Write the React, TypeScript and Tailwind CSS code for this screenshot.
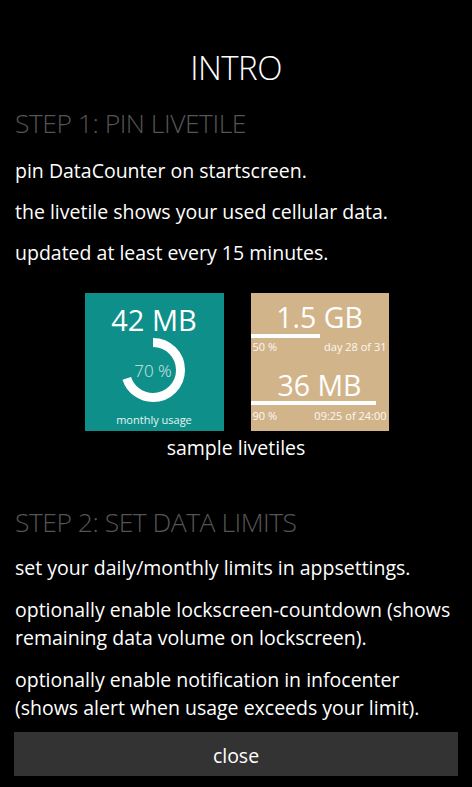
import React from "react";

const font = { fontFamily: '"Open Sans", "Noto Sans", sans-serif' };

function Ring() {
  const r = 27.5;
  const c = 2 * Math.PI * r;
  const pct = 0.7;
  return (
    <svg width="68" height="68" viewBox="0 0 68 68" className="absolute left-[34px] top-[43px]">
      <circle
        cx="34"
        cy="34"
        r={r}
        fill="none"
        stroke="#ffffff"
        strokeWidth="9"
        strokeDasharray={`${c * pct} ${c}`}
        transform="rotate(-90 34 34)"
      />
    </svg>
  );
}

export default function App() {
  return (
    <div className="w-[472px] h-[787px] bg-black text-white overflow-hidden" style={font}>
      <div className="pt-[48px] text-center text-[33px] font-light leading-[40px] tracking-[-0.5px]">INTRO</div>
      <div className="mt-[18px] px-[15px] text-[26.5px] font-light leading-[34px] text-[#555555] tracking-[-0.5px]">
        STEP 1: PIN LIVETILE
      </div>
      <div className="px-[15px] mt-[17px] flex flex-col gap-[13px] text-[19.5px] leading-[28px]">
        <p>pin DataCounter on startscreen.</p>
        <p>the livetile shows your used cellular data.</p>
        <p>updated at least every 15 minutes.</p>
      </div>
      <div className="mt-[26px] flex justify-center gap-[27px] pl-[1px]">
        <div className="relative w-[139px] h-[138px] bg-[#0e8f8a] flex flex-col items-center">
          <div className="mt-[10px] text-[29px] leading-[34px]">42 MB</div>
          <Ring />
          <div className="absolute left-0 right-0 top-[65px] text-center text-[17px] leading-[26px] font-light text-white/80 pr-[2px]">70 %</div>
          <div className="absolute left-0 right-0 bottom-[3px] text-center text-[11px] leading-[16px] text-white/90">monthly usage</div>
        </div>
        <div className="w-[138px] h-[138px] bg-[#d2b48a] flex flex-col">
          <div className="mt-[8px] text-center text-[28.5px] leading-[32px]">1.5 GB</div>
          <div className="mt-[1px] h-[4px] w-[69px] bg-white" />
          <div className="mt-[2px] flex justify-between px-[2px] text-[11px] leading-[14px] text-white/90">
            <span>50 %</span>
            <span>day 28 of 31</span>
          </div>
          <div className="mt-[15px] text-center text-[28.5px] leading-[32px]">36 MB</div>
          <div className="h-[4px] w-[125px] bg-white" />
          <div className="mt-[4px] flex justify-between px-[2px] text-[11px] leading-[14px] text-white/90">
            <span>90 %</span>
            <span>09:25 of 24:00</span>
          </div>
        </div>
      </div>
      <div className="mt-[3px] text-center text-[19.5px] leading-[28px]">sample livetiles</div>
      <div className="mt-[43px] px-[15px] text-[26.5px] font-light leading-[34px] text-[#555555] tracking-[-0.5px]">
        STEP 2: SET DATA LIMITS
      </div>
      <div className="px-[15px] mt-[15px] flex flex-col gap-[14px] text-[19.5px] leading-[28px]">
        <p>set your daily/monthly limits in appsettings.</p>
        <p>optionally enable lockscreen-countdown (shows remaining data volume on lockscreen).</p>
        <p>optionally enable notification in infocenter (shows alert when usage exceeds your limit).</p>
      </div>
      <div className="mx-[14px] mt-[10px] h-[44px] pt-[3px] bg-[#333333] flex items-center justify-center text-[19.5px]">close</div>
    </div>
  );
}
